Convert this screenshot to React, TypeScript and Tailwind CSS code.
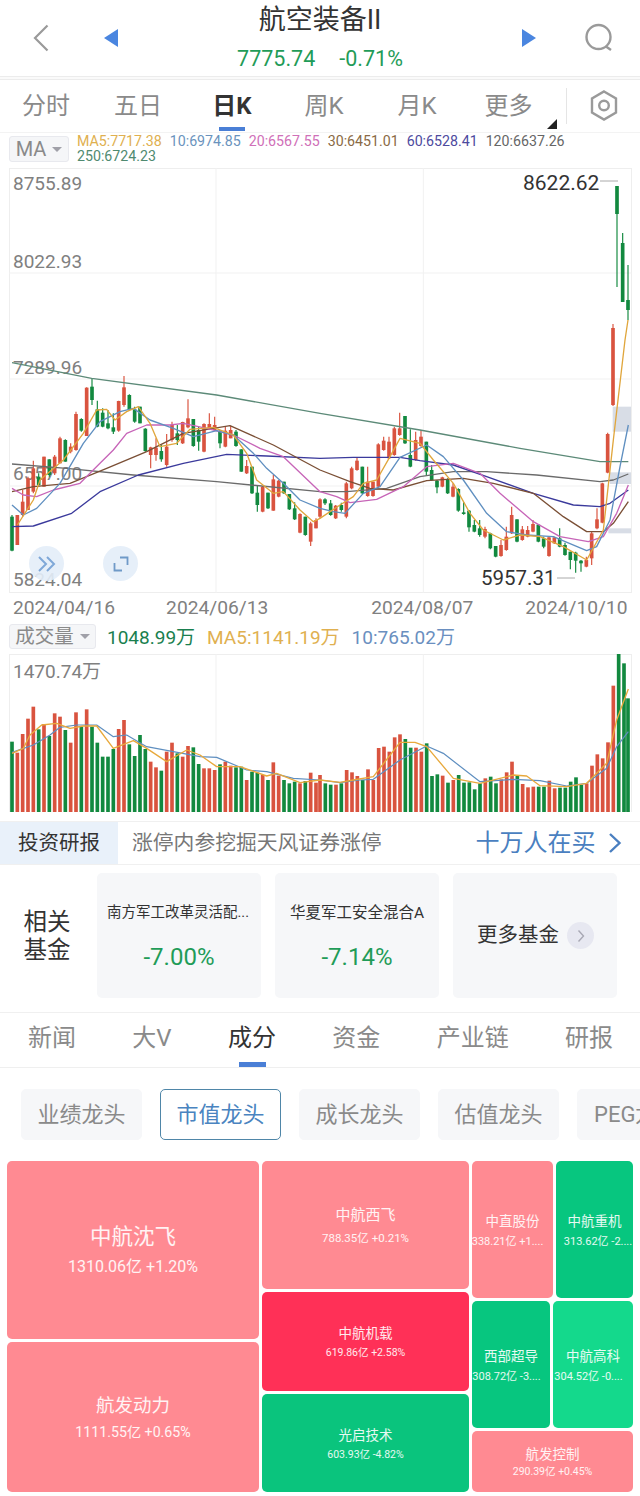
const R = "#d9533f";
const G = "#12893f";

type C = [number, string, number, number, number, number];

const leftC: [string, number, number, number, number][] = [
  ["g",525,530,632,634],["r",525,525,615,615],["r",450,485,525,530],["r",410,415,510,510],["r",362,385,455,460],["g",400,410,435,440],
  ["r",350,350,440,440],["g",358,358,405,410],["r",345,350,400,405],["r",290,295,370,370],["g",298,300,365,365],["r",310,320,335,340],
  ["r",215,222,330,332],["g",235,237,272,275],["r",142,143,288,288],["g",115,140,180,195],["g",182,208,260,262],["g",205,218,260,262],
  ["g",210,250,265,268],["g",220,262,275,282],["r",182,183,272,275],["r",108,142,195,200],["g",163,165,210,212],["g",200,208,245,248],
  ["g",200,200,250,250],["g",265,266,333,335],["r",320,322,345,385],["r",295,323,345,362],["g",315,333,358,365],["r",282,320,375,380],
  ["r",245,255,300,305],["g",255,280,300,315],["r",245,246,310,312],["r",178,235,262,265],["g",237,237,318,320],["g",260,270,305,332],
  ["r",250,252,335,337],["r",220,252,268,270],["r",230,255,270,272],["g",270,276,310,325],["r",258,272,320,322],["r",258,270,295,295],
  ["g",270,275,318,320],["g",328,328,395,395],["r",360,378,400,402],["g",380,380,460,462],["g",438,458,495,515],["r",438,440,515,517],
  ["g",458,458,505,507],["r",405,418,512,512],["r",420,422,470,472],["g",425,425,460,462],["g",462,462,508,510],["g",487,505,538,540],
  ["r",520,522,578,580],["g",530,530,585,587],["r",545,550,605,618],["r",535,540,565,565],
];

const rightC: [number, string, number, number, number, number][] = [
  [0,"r",475,478,530,535],[15,"g",475,478,490,495],[32,"g",480,490,525,527],[47,"r",495,497,535,537],[64,"g",488,495,510,515],[79,"r",425,430,530,535],
  [95,"r",380,385,445,448],[111,"r",352,362,390,392],[127,"g",380,380,460,462],[143,"r",380,425,468,470],[159,"r",425,425,468,470],[175,"r",310,313,440,442],
  [191,"r",290,302,330,332],[207,"r",290,305,355,357],[223,"r",260,265,345,347],[239,"r",218,265,285,287],[255,"g",228,228,310,312],[271,"g",268,345,380,382],
  [287,"r",275,300,360,362],[303,"r",270,290,318,320],[319,"g",305,305,395,405],[335,"g",375,390,420,422],[351,"g",420,422,442,460],[367,"r",410,412,440,442],
  [383,"g",415,417,460,462],[399,"r",430,440,470,472],[415,"g",445,447,512,515],[431,"g",487,517,522,524],[447,"g",510,512,562,575],[463,"g",540,555,575,577],
  [479,"g",540,565,585,590],[495,"r",560,567,590,595],[511,"g",578,580,625,628],[527,"g",618,618,650,652],[543,"r",600,615,648,650],[559,"r",560,590,630,632],
  [575,"r",500,525,580,582],[591,"g",538,538,605,607],[607,"r",558,568,600,602],[623,"r",558,570,590,592],[639,"r",540,552,575,577],[655,"g",552,554,605,607],
  [671,"g",590,595,620,625],[687,"r",590,592,648,650],[703,"r",590,592,610,612],[719,"g",565,595,620,622],[735,"g",608,615,645,647],[751,"g",635,635,660,688],
  [767,"g",635,638,662,698],[783,"g",660,662,670,695],[799,"r",650,660,680,682],[815,"r",575,580,655,675],[831,"r",505,538,565,568],[847,"r",428,430,548,550],
  [863,"r",278,282,398,400],[879,"r",-48,-36,195,198],[891,"g",-462,-462,-378,-159],[908,"g",-321,-291,-114,-114],[924,"g",-225,-120,-90,-60],
];

const candles: C[] = [
  ...leftC.map((c, i): C => [36 + i * 16, c[0], c[1], c[2], c[3], c[4]]),
  ...rightC.map((c): C => [960 + c[0], c[1], c[2], c[3], c[4], c[5]]),
];

const ma5 = "52,555 100,480 120,420 190,360 250,280 290,210 320,208 345,240 380,215 415,200 450,250 480,320 530,310 570,268 640,262 700,285 740,340 770,420 820,460 850,455 900,510 940,545 960,535 1020,495 1060,470 1090,430 1130,420 1170,350 1200,295 1260,310 1300,360 1360,430 1410,520 1450,570 1510,600 1560,585 1620,590 1690,620 1760,660 1810,570 1840,300 1875,0 1884,-60";
const ma10 = "36,495 70,525 110,505 180,430 250,310 300,245 360,215 400,205 450,240 520,265 580,290 650,272 700,285 760,340 800,385 850,430 900,480 960,505 1000,515 1035,520 1090,460 1140,440 1200,352 1280,315 1330,350 1390,420 1460,520 1520,575 1580,585 1660,590 1760,632 1790,620 1830,540 1860,380 1885,255";
const ma20 = "36,445 70,465 110,470 160,450 240,430 300,370 340,330 380,280 440,255 510,255 550,250 620,265 700,285 780,325 850,350 960,455 1010,470 1050,488 1130,478 1210,440 1280,380 1360,370 1440,400 1500,460 1600,545 1680,590 1765,605 1810,590 1850,520 1885,435";
const ma30 = "36,455 100,440 210,430 320,385 440,335 550,280 690,257 820,315 960,390 1050,425 1110,445 1180,450 1280,422 1390,415 1480,430 1600,460 1690,530 1760,575 1810,575 1840,550 1885,485";
const ma60 = "36,560 100,558 215,520 300,455 415,405 550,370 680,343 800,348 960,355 1060,352 1200,352 1260,362 1360,375 1460,410 1600,460 1720,495 1800,500 1830,490 1885,450";
const ma120 = "36,372 200,385 400,405 650,425 960,455 1040,455 1160,445 1260,410 1360,395 1460,395 1610,405 1800,425 1840,420 1885,402";
const ma250 = "36,68 275,115 650,165 960,220 1260,270 1560,325 1800,365 1885,365";

const volL: [string, number][] = [
  ["g",365],["r",398],["r",342],["r",296],["r",260],["g",328],["r",312],["g",348],["r",280],["r",290],["g",330],["r",368],["r",277],["g",320],["r",268],["g",320],
  ["g",368],["g",410],["g",410],["g",387],["r",327],["r",300],["g",373],["g",408],["g",345],["g",387],["r",425],["r",442],["g",452],["r",395],["r",368],["g",400],
  ["r",410],["r",378],["g",382],["g",432],["r",445],["r",445],["r",450],["g",433],["r",425],["r",437],["g",442],["g",440],["r",480],["g",455],["g",458],["r",465],
  ["g",480],["r",427],["r",467],["g",480],["g",490],["g",485],["r",490],["g",483],["r",458],["r",488],
];
const volR: [string, number][] = [
  ["r",465],["g",490],["g",494],["r",494],["g",490],["r",450],["r",457],["r",468],["g",480],["r",448],["r",480],["r",384],["r",380],["r",395],["r",352],["r",343],
  ["g",357],["g",383],["r",383],["r",395],["g",370],["g",468],["g",463],["r",467],["g",488],["r",480],["g",465],["g",488],["g",487],["g",508],["g",490],["r",475],
  ["g",470],["g",490],["r",478],["r",457],["r",425],["g",467],["r",492],["r",502],["r",500],["g",500],["g",500],["r",482],["r",505],["g",503],["g",503],["g",485],
  ["g",472],["g",495],["r",490],["r",437],["r",403],["r",415],["r",367],["r",197],["g",100],["g",130],
];
const volBars: [number, string, number][] = [
  ...volL.map((v, i): [number, string, number] => [36 + i * 16, v[0], v[1]]),
  ...volR.map((v, i): [number, string, number] => [960 + i * 16, v[0], v[1]]),
  [1884, "g", 235],
];
const volMa5 = "36,400 70,385 90,345 125,315 170,310 210,325 250,318 290,318 340,385 400,362 440,385 500,425 560,390 600,405 650,440 720,440 800,468 830,460 900,488 960,480 1020,487 1060,480 1120,470 1200,367 1245,367 1280,380 1360,475 1440,490 1540,465 1580,468 1620,497 1700,500 1760,490 1820,430 1850,300 1885,207";
const volMa10 = "36,397 100,375 150,345 180,322 230,315 290,315 340,350 380,345 440,380 520,395 600,410 650,412 740,450 800,455 880,475 960,480 1020,488 1080,480 1120,478 1200,420 1280,378 1330,400 1440,485 1540,478 1620,482 1700,498 1760,490 1820,445 1850,380 1885,335";

const legend: [string, string][] = [
  ["MA5:7717.38", "text-[#e0b050]"],
  ["10:6974.85", "text-[#6a93bd]"],
  ["20:6567.55", "text-[#d070b8]"],
  ["30:6451.01", "text-[#8a6a45]"],
  ["60:6528.41", "text-[#4d4a9e]"],
  ["120:6637.26", "text-[#666666]"],
  ["250:6724.23", "text-[#4f8a70]"],
];

const periodTabs: [string, string][] = [
  ["分时", "text-[#8a8a8a]"],
  ["五日", "text-[#8a8a8a]"],
  ["日K", "font-bold text-[#333] ml-[2px]"],
  ["周K", "text-[#8a8a8a]"],
  ["月K", "text-[#8a8a8a] pl-[2px]"],
  ["更多", "text-[#8a8a8a] pl-[1px]"],
];

function Caret() {
  return <span className="ml-[6px] w-0 h-0 border-x-[5px] border-x-transparent border-t-[5px] border-t-[#a0a0a8]" />;
}

function Cell({ name, sub, bg, nameCls, subCls, gap, className }: { name: string; sub: string; bg: string; nameCls: string; subCls: string; gap: string; className: string }) {
  return (
    <div className={`${bg} ${className} ${gap} rounded-[5px] flex flex-col items-center justify-center text-white/90 whitespace-nowrap overflow-hidden`}>
      <div className={nameCls}>{name}</div>
      <div className={subCls}>{sub}</div>
    </div>
  );
}

export default function App() {
  return (
    <div className="w-[640px] h-[1496px] overflow-hidden bg-white font-[Roboto,'Noto_Sans_CJK_SC',sans-serif]">
      {/* header */}
      <div className="h-[76px] flex items-center relative">
        <div className="w-[104px] pl-[33px]">
          <svg width="16" height="28" viewBox="0 0 16 28" fill="none"><path d="M14.5 1.5 2 14l12.5 12.5" stroke="#9a9a9a" strokeWidth="2.2" /></svg>
        </div>
        <svg width="14" height="18" viewBox="0 0 14 18"><path d="M14 0v18L0 9z" fill="#4a86e0" /></svg>
        <div className="flex-1 flex flex-col items-center">
          <div className="text-[27px] leading-[34px] text-[#333] mt-[-1px]">航空装备II</div>
          <div className="flex gap-[24px] text-[21.5px] leading-[26px] mt-[9px] text-[#1f9c58]">
            <span>7775.74</span>
            <span>-0.71%</span>
          </div>
        </div>
        <svg width="14" height="18" viewBox="0 0 14 18"><path d="M0 0v18l14-9z" fill="#4a86e0" /></svg>
        <div className="w-[104px] pl-[48px]">
          <svg width="30" height="30" viewBox="0 0 30 30" fill="none">
            <circle cx="14.5" cy="14" r="12" stroke="#9a9a9a" strokeWidth="2.4" />
            <path d="M22 23.5l5 3.5" stroke="#9a9a9a" strokeWidth="2.4" />
          </svg>
        </div>
      </div>
      <div className="h-[4px] border-y border-[#ececec] bg-[#fafafa]" />

      {/* period tabs */}
      <div className="h-[53px] flex items-center relative border-b border-[#f3f3f3]">
        {periodTabs.map(([t, c]) => (
          <div key={t} className={`w-[92px] text-center text-[24px] leading-[52px] ${c}`}>{t}</div>
        ))}
        <div className="absolute left-[219px] bottom-[1px] w-[26px] h-[4px] bg-[#4a7fd6]" />
        <div className="absolute left-[547px] top-[39px] w-0 h-0 border-l-[10px] border-l-transparent border-b-[10px] border-b-[#222]" />
        <div className="w-px h-[36px] bg-[#e5e5e5] ml-[12px]" />
        <div className="ml-[22px]">
          <svg width="30" height="34" viewBox="0 0 30 34" fill="none">
            <path d="M15 2.5l12 7v14l-12 7-12-7v-14z" stroke="#9a9a9a" strokeWidth="2.4" />
            <circle cx="15" cy="16.5" r="4.8" stroke="#9a9a9a" strokeWidth="2.4" />
          </svg>
        </div>
      </div>

      {/* MA legend */}
      <div className="h-[35px] flex items-start pl-[9px]">
        <div className="w-[60px] h-[26px] mt-[3px] rounded-[3px] border border-[#e8e9ee] bg-[#f5f6f8] flex items-center justify-center text-[20px] text-[#8a8a8a]">
          MA<Caret />
        </div>
        <div className="ml-[8px] w-[510px] flex flex-wrap gap-x-[8px] text-[14.2px] leading-[15px] pt-[1px]">
          {legend.map(([t, c]) => (
            <span key={t} className={c}>{t}</span>
          ))}
        </div>
      </div>

      {/* main chart */}
      <div className="relative ml-[9px] w-[623px] h-[425px] border border-[#eeeeee]">
        {[
          ["8755.89", "top-[4px]"],
          ["8022.93", "top-[82px]"],
          ["7289.96", "top-[188px]"],
          ["6557.00", "top-[294px]"],
          ["5824.04", "top-[400px]"],
        ].map(([t, c]) => (
          <div key={t} className={`absolute left-[3px] ${c} text-[19px] leading-[22px] text-[#808080]`}>{t}</div>
        ))}
        <svg className="absolute left-[-10px] top-[-1px] w-[640px] h-[425px] overflow-visible" viewBox="0 -516 1920 1275" fill="none">
          {[-201, 117, 438].map((y) => (
            <line key={y} x1="27" x2="1896" y1={y} y2={y} stroke="#f1f1f1" strokeWidth="3" />
          ))}
          {[648, 1270].map((x) => (
            <line key={x} x1={x} x2={x} y1="-516" y2="759" stroke="#f1f1f1" strokeWidth="3" />
          ))}
          <rect x="1838" y="200" width="55" height="75" fill="#d8dde6" />
          <rect x="1830" y="397" width="63" height="35" fill="#d8dde6" />
          <rect x="1825" y="565" width="68" height="15" fill="#d8dde6" />
          {candles.map(([x, c, wt, bt, bb, wb], i) => (
            <g key={i} stroke={c === "r" ? R : G}>
              <line x1={x} x2={x} y1={wt} y2={wb} strokeWidth="3.5" />
              <line x1={x} x2={x} y1={bt} y2={bb} strokeWidth="11" />
            </g>
          ))}
          <g strokeWidth="4" strokeLinejoin="round">
            <polyline points={ma250} stroke="#5c8a78" />
            <polyline points={ma120} stroke="#6b6b6b" />
            <polyline points={ma60} stroke="#3b3a9c" />
            <polyline points={ma30} stroke="#7a4f35" />
            <polyline points={ma20} stroke="#c765b8" />
            <polyline points={ma10} stroke="#5f8fc0" />
            <polyline points={ma5} stroke="#e0a63c" />
          </g>
          <line x1="1800" x2="1854" y1="-477" y2="-477" stroke="#aaaaaa" strokeWidth="3" />
          <line x1="1671" x2="1725" y1="714" y2="714" stroke="#aaaaaa" strokeWidth="3" />
        </svg>
        <div className="absolute left-[513px] top-[1px] text-[21px] leading-[26px] text-[#333]">8622.62</div>
        <div className="absolute left-[471px] top-[397px] text-[20.5px] leading-[24px] text-[#333]">5957.31</div>
        <div className="absolute left-[19px] top-[377px] w-[35px] h-[35px] rounded-full bg-[#e3edf8]/90 flex items-center justify-center">
          <svg width="20" height="18" viewBox="0 0 20 18" fill="none"><path d="M2 2l7 7-7 7M10 2l7 7-7 7" stroke="#7fa8d8" strokeWidth="2" /></svg>
        </div>
        <div className="absolute left-[93px] top-[377px] w-[35px] h-[35px] rounded-full bg-[#e3edf8]/90 flex items-center justify-center">
          <svg width="16" height="16" viewBox="0 0 16 16" fill="none"><path d="M7 1.5h7.5V9M9 14.5H1.5V7" stroke="#6f9ac8" strokeWidth="1.8" /></svg>
        </div>
      </div>

      {/* dates */}
      <div className="h-[29px] relative text-[19.2px] leading-[29px] text-[#808080] flex">
        <span className="ml-[13px]">2024/04/16</span>
        <span className="ml-[51px]">2024/06/13</span>
        <span className="ml-[103px]">2024/08/07</span>
        <span className="ml-[52px]">2024/10/10</span>
      </div>

      {/* volume header */}
      <div className="h-[32px] flex items-start pl-[9px] text-[19px] leading-[26px]">
        <div className="w-[87px] h-[25px] mt-[2px] rounded-[3px] border border-[#e8e9ee] bg-[#f5f6f8] flex items-center justify-center text-[19.5px] text-[#8a8a8a]">
          成交量<Caret />
        </div>
        <span className="ml-[11px] mt-[3px] text-[#1a7f4f]">1048.99万</span>
        <span className="ml-[12px] mt-[3px] text-[#e0b050]">MA5:1141.19万</span>
        <span className="ml-[12px] mt-[3px] text-[#6a8fc0]">10:765.02万</span>
      </div>

      {/* volume chart */}
      <div className="relative ml-[9px] w-[623px] h-[158px] border-t border-x border-[#eeeeee]">
        <div className="absolute left-[3px] top-[6px] text-[19px] leading-[22px] text-[#808080]">1470.74万</div>
        <svg className="absolute left-[-10px] top-[-1px] w-[640px] h-[158px]" viewBox="0 102 1920 474" fill="none">
          {[648, 1270].map((x) => (
            <line key={x} x1={x} x2={x} y1="102" y2="576" stroke="#f1f1f1" strokeWidth="3" />
          ))}
          {volBars.map(([x, c, t], i) => (
            <line key={i} x1={x} x2={x} y1={t} y2="576" stroke={c === "r" ? R : G} strokeWidth="11" />
          ))}
          <polyline points={volMa10} stroke="#5f8fc0" strokeWidth="3.6" strokeLinejoin="round" />
          <polyline points={volMa5} stroke="#e8a93c" strokeWidth="4" strokeLinejoin="round" />
        </svg>
      </div>

      {/* research */}
      <div className="mt-[9px] h-[44px] flex items-center border-y border-[#f0f0f0]">
        <div className="w-[118px] h-full bg-[#e9f1fa] text-[#333] text-[20.5px] flex items-center pl-[18px] pt-[1px]">投资研报</div>
        <div className="ml-[14px] text-[20.8px] text-[#777] pt-[1px]">涨停内参挖掘天风证券涨停</div>
        <div className="ml-[94px] text-[24px] text-[#4a7fc0]">十万人在买</div>
        <svg className="ml-[12px]" width="14" height="22" viewBox="0 0 14 22" fill="none"><path d="M2 2l9.5 9L2 20" stroke="#4a7fc0" strokeWidth="2.4" /></svg>
      </div>

      {/* funds */}
      <div className="h-[148px] flex items-start border-b border-[#f0f0f0] pt-[8px]">
        <div className="w-[97px] h-[125px] flex flex-col items-center justify-center text-[23.5px] leading-[28px] text-[#333] pr-[3px]">
          <span>相关</span>
          <span>基金</span>
        </div>
        <div className="w-[164px] h-[125px] bg-[#f6f7f9] rounded-[5px] flex flex-col items-center">
          <div className="mt-[30px] text-[14.5px] leading-[20px] text-[#333] whitespace-nowrap pr-[2px]">南方军工改革灵活配...</div>
          <div className="mt-[20px] text-[24px] leading-[28px] text-[#1f9c58]">-7.00%</div>
        </div>
        <div className="ml-[14px] w-[164px] h-[125px] bg-[#f6f7f9] rounded-[5px] flex flex-col items-center">
          <div className="mt-[30px] text-[15.5px] leading-[20px] text-[#333] whitespace-nowrap">华夏军工安全混合A</div>
          <div className="mt-[20px] text-[24px] leading-[28px] text-[#1f9c58]">-7.14%</div>
        </div>
        <div className="ml-[14px] w-[164px] h-[125px] bg-[#f6f7f9] rounded-[5px] flex items-center pl-[24px]">
          <span className="text-[20.5px] text-[#333]">更多基金</span>
          <span className="ml-[8px] w-[27px] h-[27px] rounded-full bg-[#e7e8f1] flex items-center justify-center">
            <svg width="8" height="14" viewBox="0 0 8 14" fill="none"><path d="M1.5 1.5 6.5 7l-5 5.5" stroke="#a8a8b4" strokeWidth="1.4" /></svg>
          </span>
        </div>
      </div>

      {/* tabs */}
      <div className="h-[55px] relative flex justify-between pl-[28px] pr-[27px] border-b border-[#efefef] text-[24px] leading-[50px] text-[#8a8a8a]">
        <span>新闻</span>
        <span>大V</span>
        <span className="text-[#333]">成分</span>
        <span>资金</span>
        <span>产业链</span>
        <span>研报</span>
        <div className="absolute left-[239px] bottom-0 w-[27px] h-[5px] bg-[#4a7fd6]" />
      </div>

      {/* chips */}
      <div className="pt-[21px] h-[93px] flex gap-[18px] pl-[21px] overflow-hidden text-[22px]">
        {["业绩龙头", "市值龙头", "成长龙头", "估值龙头", "PEG龙头"].map((t, i) => (
          <div key={t} className={`shrink-0 w-[121px] h-[51px] rounded-[5px] flex items-center justify-center border whitespace-nowrap ${i === 4 ? "justify-start pl-[16px]" : ""} ${i === 1 ? "bg-white border-[#4f86a8] text-[#4a84c0]" : "bg-[#f6f7f9] border-[#f6f7f9] text-[#8a8a8a]"}`}>{t}</div>
        ))}
      </div>

      {/* treemap */}
      <div className="flex gap-[3px] pl-[7px]">
        <div className="w-[252px] flex flex-col gap-[3px]">
          <Cell className="h-[178px]" bg="bg-[#ff8a92]" name="中航沈飞" sub="1310.06亿 +1.20%" nameCls="text-[21.5px] leading-[28px]" subCls="text-[16px] leading-[20px]" gap="gap-[6px]" />
          <Cell className="h-[150px]" bg="bg-[#ff8a92]" name="航发动力" sub="1111.55亿 +0.65%" nameCls="text-[18.5px] leading-[24px]" subCls="text-[14.2px] leading-[18px]" gap="gap-[5px]" />
        </div>
        <div className="w-[207px] flex flex-col gap-[3px]">
          <Cell className="h-[128px]" bg="bg-[#ff8a92]" name="中航西飞" sub="788.35亿 +0.21%" nameCls="text-[15px] leading-[20px]" subCls="text-[11.5px] leading-[14px]" gap="gap-[6px]" />
          <Cell className="h-[99px]" bg="bg-[#ff3057]" name="中航机载" sub="619.86亿 +2.58%" nameCls="text-[13.5px] leading-[18px]" subCls="text-[10.5px] leading-[13px]" gap="gap-[4px]" />
          <Cell className="h-[98px]" bg="bg-[#0ac47d]" name="光启技术" sub="603.93亿 -4.82%" nameCls="text-[13.5px] leading-[18px]" subCls="text-[10.5px] leading-[13px]" gap="gap-[4px]" />
        </div>
        <div className="w-[161px] flex flex-col gap-[3px]">
          <div className="flex gap-[3px]">
            <Cell className="w-[81px] h-[137px]" bg="bg-[#ff8a92]" name="中直股份" sub="338.21亿 +1...." nameCls="text-[13.5px] leading-[18px]" subCls="text-[11px] leading-[13px] mr-[10px]" gap="gap-[5px]" />
            <Cell className="w-[77px] h-[137px]" bg="bg-[#07c67f]" name="中航重机" sub="313.62亿 -2...." nameCls="text-[13.5px] leading-[18px]" subCls="text-[11px] leading-[13px] ml-[7px]" gap="gap-[5px]" />
          </div>
          <div className="flex gap-[3px]">
            <Cell className="w-[78px] h-[127px]" bg="bg-[#07c67f]" name="西部超导" sub="308.72亿 -3...." nameCls="text-[13.5px] leading-[18px]" subCls="text-[11px] leading-[13px] mr-[9px]" gap="gap-[5px]" />
            <Cell className="w-[80px] h-[127px]" bg="bg-[#14d98c]" name="中航高科" sub="304.52亿 -0...." nameCls="text-[13.5px] leading-[18px]" subCls="text-[11px] leading-[13px] mr-[9px]" gap="gap-[5px]" />
          </div>
          <Cell className="h-[61px]" bg="bg-[#ff8a92]" name="航发控制" sub="290.39亿 +0.45%" nameCls="text-[13.5px] leading-[18px]" subCls="text-[10.5px] leading-[13px]" gap="gap-[2px]" />
        </div>
      </div>
    </div>
  );
}
